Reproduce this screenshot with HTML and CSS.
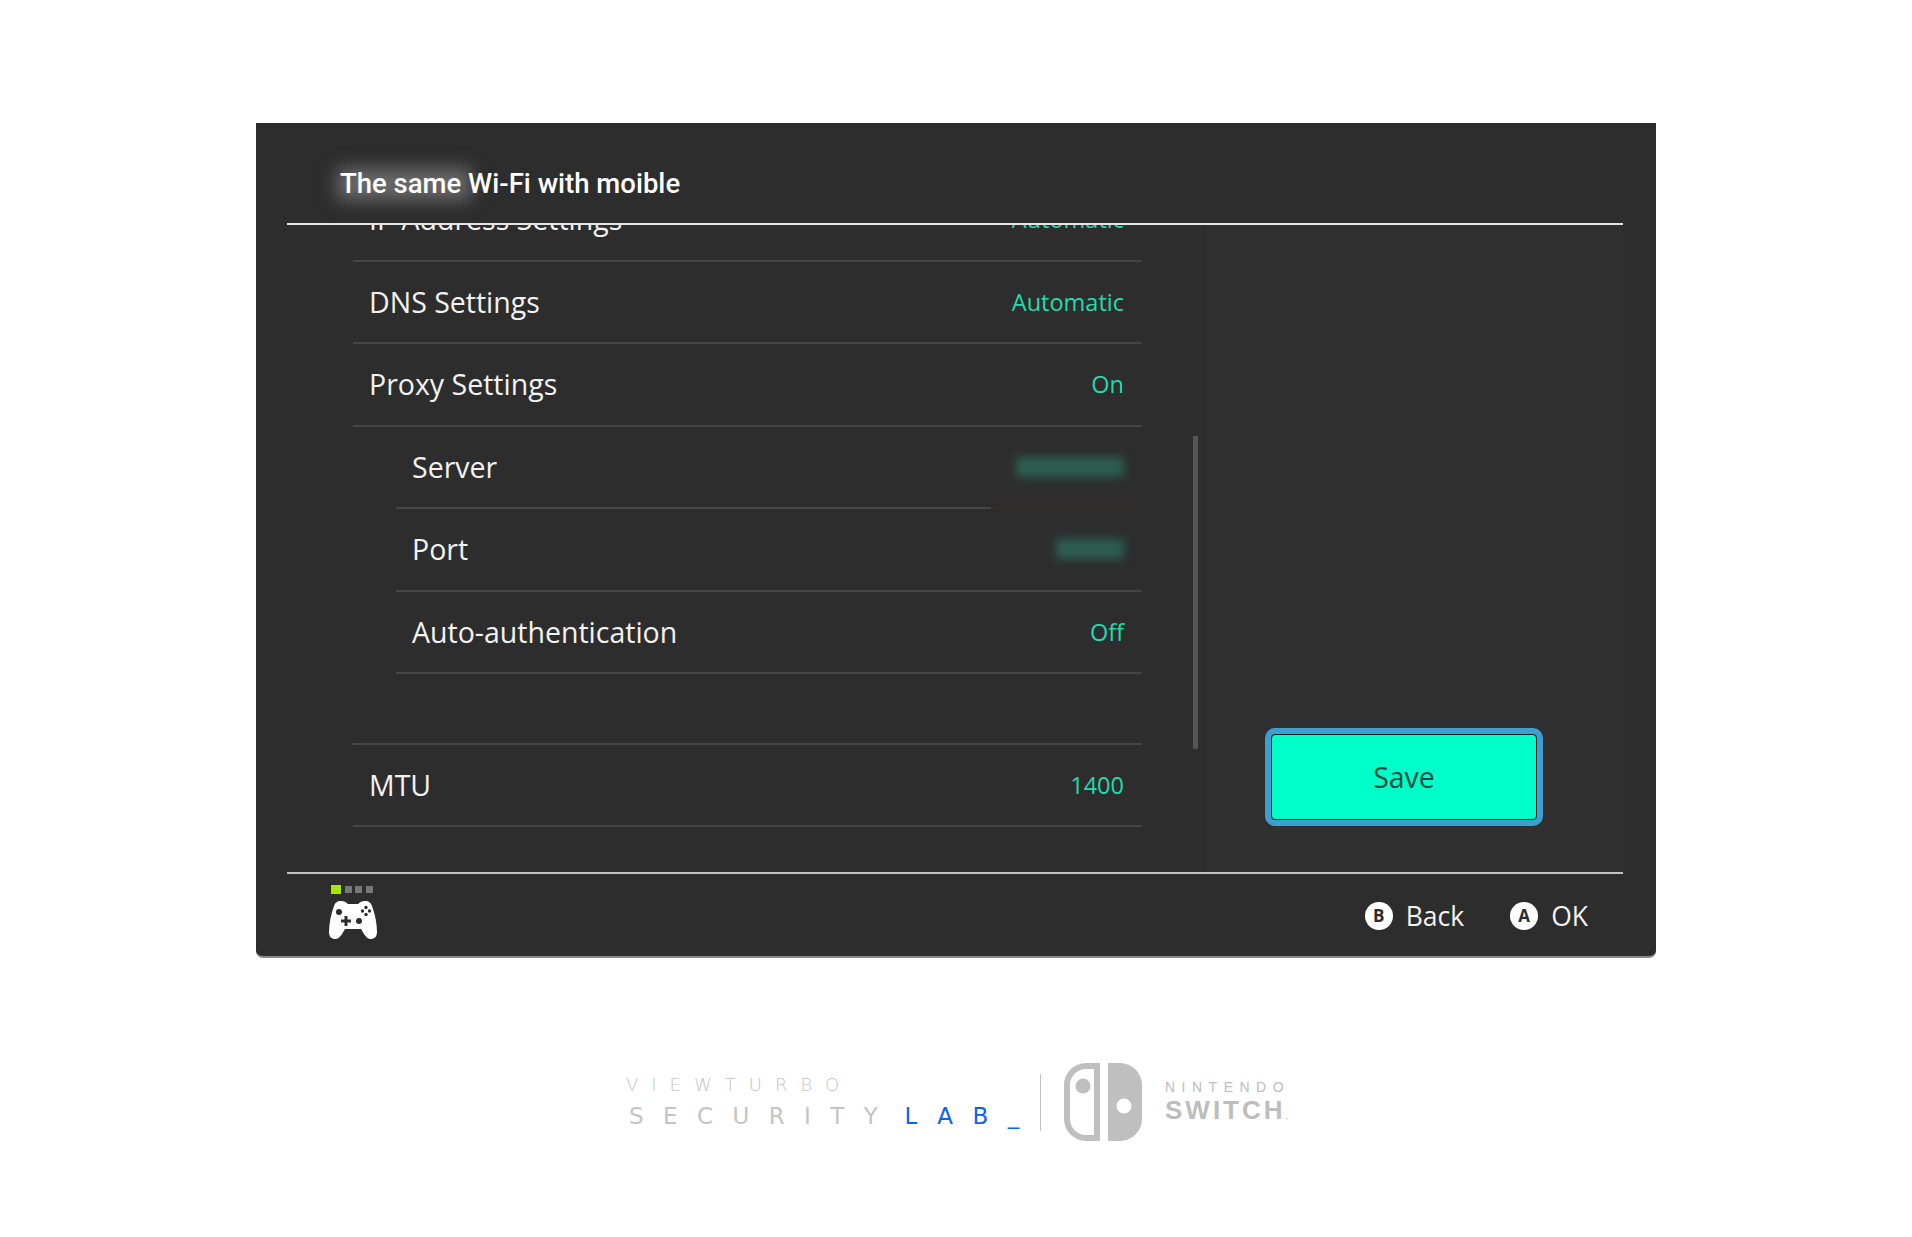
FILE: index.html
```html
<!DOCTYPE html>
<html lang="en">
<head>
  <meta charset="UTF-8" />
  <meta name="viewport" content="width=device-width, initial-scale=1.0"/>
  <title>The same Wi-Fi with moible</title>
  <link rel="stylesheet" href="styles.css">
</head>
<body>
  <div class="panel">
    <div class="header">
      <span class="glow"></span>
      <div class="title">The same Wi-Fi with moible</div>
    </div>

    <div class="main">
      <div class="list-wrap">
        <div class="list">
          <div class="row"><span>IP Address Settings</span><span class="value">Automatic</span></div>
          <div class="row"><span>DNS Settings</span><span class="value">Automatic</span></div>
          <div class="row"><span>Proxy Settings</span><span class="value">On</span></div>
          <div class="row sub smudged"><span>Server</span><span class="hidden-value server"></span></div>
          <div class="row sub"><span>Port</span><span class="hidden-value port"></span></div>
          <div class="row sub"><span>Auto-authentication</span><span class="value">Off</span></div>
          <div class="row mtu"><span>MTU</span><span class="value">1400</span></div>
        </div>
        <div class="scrollbar"></div>
      </div>
      <div class="side">
        <div class="save">Save</div>
      </div>
    </div>

    <div class="footer">
      <div class="player">
        <div class="dots"><i class="on"></i><i></i><i></i><i></i></div>
        <svg class="pad" width="50" height="40" viewBox="0 0 50 40">
          <path fill="#fff" d="M13 1 C9 1 7 3 6 6 C3 14 1 24 1 32 C1 37 4 39 7 39 C10 39 12 37 14 34 L17 29 H33 L36 34 C38 37 40 39 43 39 C46 39 49 37 49 32 C49 24 47 14 44 6 C43 3 41 1 37 1 C34 1 32 2 30 4 H20 C18 2 16 1 13 1 Z"/>
          <circle cx="11" cy="12" r="3" fill="#2d2d2d"/>
          <circle cx="31" cy="21" r="3" fill="#2d2d2d"/>
          <path fill="#2d2d2d" d="M16.5 16 H19.5 V19.5 H23 V22.5 H19.5 V26 H16.5 V22.5 H13 V19.5 H16.5 Z"/>
          <circle cx="38" cy="7.5" r="1.7" fill="#2d2d2d"/>
          <circle cx="38" cy="14.5" r="1.7" fill="#2d2d2d"/>
          <circle cx="34.5" cy="11" r="1.7" fill="#2d2d2d"/>
          <circle cx="41.5" cy="11" r="1.7" fill="#2d2d2d"/>
        </svg>
      </div>
      <div class="hints">
        <div class="hint"><span class="key">B</span>Back</div>
        <div class="hint"><span class="key">A</span>OK</div>
      </div>
    </div>
  </div>

  <div class="brand">
    <div class="lab">
      <div class="lab-top">VIEWTURBO</div>
      <div class="lab-bottom">SECURITY<span class="blue">LAB_</span></div>
    </div>
    <div class="brand-line"></div>
    <svg class="joycons" width="78" height="78" viewBox="0 0 78 78">
      <path fill="#bfbfbf" fill-rule="evenodd" d="M36 0 H22 A22 22 0 0 0 0 22 V56 A22 22 0 0 0 22 78 H36 Z M30 6 V72 H22 A16 16 0 0 1 6 56 V22 A16 16 0 0 1 22 6 Z"/>
      <circle cx="19" cy="23" r="7.5" fill="#bfbfbf"/>
      <path fill="#bfbfbf" d="M44 0 H56 A22 22 0 0 1 78 22 V56 A22 22 0 0 1 56 78 H44 Z"/>
      <circle cx="60" cy="43" r="7.5" fill="#fff"/>
    </svg>
    <div class="ns">
      <div class="ns-top">NINTENDO</div>
      <div class="ns-bottom">SWITCH<small>.</small></div>
    </div>
  </div>
</body>
</html>
```

FILE: styles.css
```css
html, body {
  margin: 0;
  height: 1237px;
  overflow: hidden;
  background-color: #fff;
}
body {
  font-family: "Open Sans", sans-serif;
  color: #f2f2f2;
}
.panel {
  width: 1400px;
  height: 835px;
  margin: 123px 0 0 256px;
  box-sizing: border-box;
  padding: 0 33px 0 31px;
  background-color: #2d2d2d;
  border-radius: 0 0 7px 7px;
  border-bottom: 2px solid #8a8a8a;
  display: flex;
  flex-direction: column;
}
.header {
  height: 102px;
  flex: none;
  box-sizing: border-box;
  padding: 42px 0 0 53px;
  border-bottom: 2px solid #e4e4e4;
  position: relative;
  z-index: 1;
  background-color: #2d2d2d;
}
.title {
  position: relative;
  font-family: Roboto, sans-serif;
  font-size: 27.5px;
  font-weight: 500;
  line-height: 38px;
  color: #fff;
}
.glow {
  position: absolute;
  left: 50px;
  top: 45px;
  width: 134px;
  height: 32px;
  background-color: #6a6a6a;
  filter: blur(9px);
}
.main {
  flex: 1;
  min-height: 0;
  display: flex;
  border-bottom: 2px solid #c4c4c4;
}
.list-wrap {
  width: 920px;
  flex: none;
  display: flex;
  overflow: hidden;
}
.list {
  width: 789px;
  margin: -46px 0 0 66px;
  flex: none;
}
.row {
  height: 82.5px;
  box-sizing: border-box;
  padding: 0 18px 0 16px;
  display: flex;
  align-items: center;
  justify-content: space-between;
  border-bottom: 2px solid #454545;
  font-size: 28.5px;
  position: relative;
}
.row.sub {
  margin-left: 43px;
  padding-left: 16px;
}
.row.mtu {
  height: 84px;
  border-top: 2px solid #454545;
  margin-top: 68.5px;
}
.value {
  font-size: 23.5px;
  color: #1fdcb0;
}
.hidden-value {
  display: block;
  height: 20px;
  background-color: #2c5f50;
  filter: blur(5px);
}
.hidden-value.server { width: 108px; }
.hidden-value.port { width: 68px; }
.smudged::after {
  content: "";
  position: absolute;
  right: -2px;
  bottom: -3px;
  width: 153px;
  height: 6px;
  background-color: #2e2d2b;
  filter: blur(1px);
}
.scrollbar {
  width: 5px;
  height: 313px;
  margin: 211px 0 0 51px;
  background-color: #555;
  flex: none;
}
.side {
  flex: 1;
  display: flex;
  align-items: flex-start;
  background-color: #303030;
}
.save {
  margin: 509px 0 0 64px;
  width: 266px;
  height: 86px;
  box-sizing: border-box;
  background-color: #00ffc8;
  border: 1.5px solid #0c1f1d;
  outline: 6px solid #3d9fcf;
  border-radius: 4px;
  display: flex;
  align-items: center;
  justify-content: center;
  font-size: 28.5px;
  color: #124c44;
}
.footer {
  flex: none;
  height: 82px;
  display: flex;
  align-items: flex-start;
  justify-content: space-between;
}
.player {
  margin: 11px 0 0 41px;
  display: flex;
  flex-direction: column;
  align-items: flex-start;
}
.dots {
  display: flex;
  gap: 3.5px;
  margin: 0 0 6px 3px;
}
.dots i {
  width: 7px;
  height: 7px;
  margin-top: 1px;
  background-color: #777;
}
.dots i.on {
  width: 10px;
  height: 9px;
  margin-top: 0;
  background-color: #a6e600;
}
.pad {
  display: block;
}
.hints {
  display: flex;
  gap: 46px;
  margin: 22px 35px 0 0;
}
.hint {
  display: flex;
  align-items: center;
  gap: 13px;
  font-size: 26.5px;
  line-height: 40px;
}
.key {
  width: 28px;
  height: 28px;
  border-radius: 50%;
  background-color: #fff;
  color: #2d2d2d;
  display: flex;
  align-items: center;
  justify-content: center;
  font-size: 17px;
  font-weight: 700;
}
.brand {
  margin: 105px 0 0 626px;
  height: 78px;
  display: flex;
  align-items: center;
}
.lab {
  width: 414px;
  flex: none;
  color: #c4c4c4;
  font-family: "DejaVu Sans", sans-serif;
}
.lab-top {
  font-size: 18px;
  font-weight: 200;
  line-height: 20px;
  letter-spacing: 13px;
}
.lab-bottom {
  margin: 8px 0 0 3px;
  font-size: 23px;
  line-height: 26px;
  letter-spacing: 19.4px;
  white-space: nowrap;
}
.blue {
  margin-left: 7.5px;
  color: #0a62f5;
}
.brand-line {
  width: 1px;
  height: 57px;
  background-color: #c4c4c4;
  flex: none;
}
.joycons {
  margin-left: 23px;
  flex: none;
}
.ns {
  margin: 7px 0 0 23px;
  color: #bdbdbd;
  font-family: "Liberation Sans", sans-serif;
}
.ns-top {
  font-size: 14px;
  line-height: 16px;
  letter-spacing: 6.5px;
}
.ns-bottom {
  font-size: 26px;
  line-height: 30px;
  font-weight: 700;
  letter-spacing: 3px;
  white-space: nowrap;
}
.ns-bottom small {
  font-size: 8px;
}
```
